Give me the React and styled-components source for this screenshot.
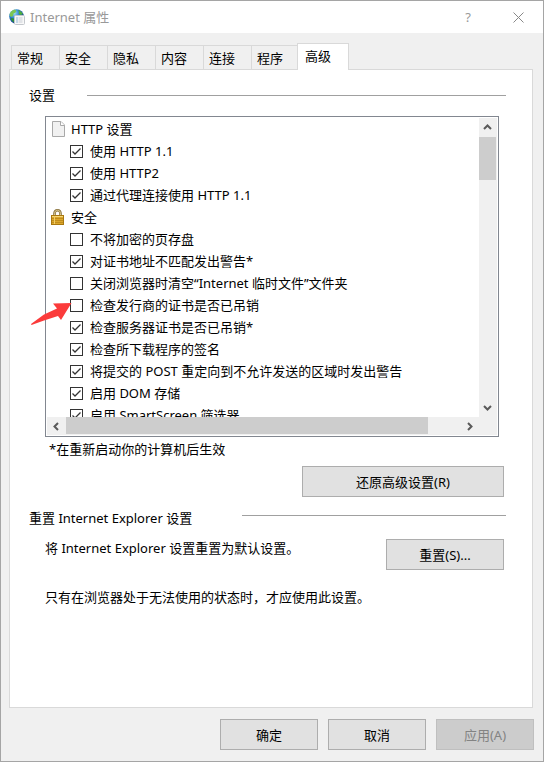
import React from "react"
import styled, {createGlobalStyle, css} from 'styled-components'

const GlobalStyle = createGlobalStyle`
	*{box-sizing:border-box;}
	body{
		margin:0;
		background:#f0f0f0;
		color:#000;
		font:13px/18px "Noto Sans", "Noto Sans CJK SC", sans-serif;
	}
	button, input{font:inherit; color:inherit; margin:0;}
`

////WINDOW FRAME
const Window = styled.main`
	display:flex;
	flex-direction:column;
	min-height:100vh;
	border:1px solid #a5a5a5;
	background:#f0f0f0;
`
const TitleBar = styled.header`
	display:flex;
	align-items:center;
	height:32px;
	padding-left:8px;
	background:#fff;
	color:#999;
`
const Title = styled.h1`
	flex:1;
	margin:0 0 0 5px;
	font-size:13px;
	font-weight:400;
`
const CaptionButton = styled.button`
	display:flex;
	align-items:center;
	justify-content:center;
	width:50px;
	height:30px;
	padding:0;
	border:0;
	background:none;
`
const Body = styled.div`
	display:flex;
	flex:1;
	flex-direction:column;
	padding:10px 10px 0 8px;
`

////TABS
const TabList = styled.nav`
	display:flex;
	align-items:flex-end;
	height:26px;
	padding-left:2px;
`
const Tab = styled.button`
	width:48px;
	height:24px;
	padding:0 0 0 5px;
	border:1px solid #d9d9d9;
	border-width:1px 0 0 1px;
	background:#f0f0f0;
	text-align:left;
	${props => props.$active && css`
		position:relative;
		width:52px;
		height:27px;
		margin:0 0 -1px -2px;
		padding:0 0 2px 7px;
		border-width:1px 1px 0;
		background:#fff;
	`}
`
const Panel = styled.section`
	flex:1;
	padding:16px 26px 16px 19px;
	border:1px solid #d9d9d9;
	background:#fff;
`

////GROUPS INSIDE THE PANEL
const GroupTitle = styled.div`
	display:flex;
	align-items:flex-start;
	gap:${props => props.$gap}px;
	h2{
		margin:0;
		font-size:13px;
		font-weight:400;
	}
	&::after{
		content:"";
		flex:1;
		height:1px;
		margin-top:${props => props.$rule}px;
		background:#a0a0a0;
	}
`
const GroupBody = styled.div`
	padding:12px 2px 12px 16px;
`
const ListFrame = styled.div`
	position:relative;
	margin-right:5px;
`
const ListBox = styled.div`
	display:grid;
	grid-template-columns:1fr 18px;
	grid-template-rows:1fr 18px;
	height:321px;
	padding:1px;
	border:1px solid #828790;
`
const Items = styled.div`
	overflow:hidden;
`
const Category = styled.div`
	display:flex;
	align-items:center;
	gap:5px;
	height:22px;
	padding-left:4px;
	white-space:nowrap;
`
const Option = styled.label`
	display:flex;
	align-items:center;
	gap:7px;
	height:22px;
	padding-left:23px;
	white-space:nowrap;
`
const Tick = styled.span`
	display:grid;
	width:13px;
	height:13px;
	input, svg{
		grid-area:1 / 1;
		width:13px;
		height:13px;
	}
	input{
		appearance:none;
		border:1px solid #333;
		background:#fff;
	}
	svg{
		display:none;
		pointer-events:none;
	}
	input:checked + svg{display:block;}
`
const ScrollBar = styled.div`
	display:flex;
	flex-direction:${props => props.$vertical ? 'column' : 'row'};
	background:#f0f0f0;
`
const ScrollButton = styled.button`
	display:flex;
	flex:0 0 19px;
	align-items:center;
	justify-content:center;
	padding:0 1px 0 0;
	border:0;
	background:none;
`
const Track = styled.div`
	display:flex;
	flex:1;
	flex-direction:inherit;
`
const Thumb = styled.div`
	flex:0 0 ${props => props.$size};
	margin:${props => props.$vertical ? '0 1px 0 0' : '0 0 1px 0'};
	background:#cdcdcd;
`
const Corner = styled.div`
	background:#f0f0f0;
`
const Pointer = styled.svg`
	position:absolute;
	top:186px;
	left:-15px;
`
const Note = styled.p`
	margin:0;
`
const Footnote = styled(Note)`
	padding:3px 0 8px 4px;
`
const Warning = styled(Note)`
	padding-top:18px;
`
const ActionRow = styled.div`
	display:flex;
	justify-content:${props => props.$end ? 'flex-end' : 'space-between'};
	align-items:flex-start;
`
const Button = styled.button`
	width:${props => props.$width || 98}px;
	height:31px;
	padding:0;
	border:1px solid #adadad;
	background:#e1e1e1;
	&:disabled{
		border-color:#bfbfbf;
		background:#ccc;
		color:#838383;
	}
`
const Footer = styled.footer`
	display:flex;
	justify-content:flex-end;
	gap:10px;
	padding:11px 9px 11px;
`

////ICONS
const GlobeIcon = () => (
	<svg width="16" height="16" viewBox="0 0 16 16" aria-hidden="true">
		<defs>
			<radialGradient id="sea" cx="35%" cy="28%" r="75%">
				<stop offset="0" stopColor="#9fdcf5"/>
				<stop offset=".45" stopColor="#2c83cf"/>
				<stop offset="1" stopColor="#0b2f80"/>
			</radialGradient>
		</defs>
		<circle cx="7.500" cy="7.500" r="7.300" fill="url(#sea)"/>
		<path d="M1 4Q3 1 6 .6L7.500 2 6 4 4.500 4.500 4 7 2 8 .6 6.500Z" fill="#7cc653"/>
		<path d="M9 .8Q12.500 2 14 5L11.500 6 9.500 4.500 10 3Z" fill="#4fae3c"/>
		<path d="M2 9L5 9.500 5.500 13.500Q3 12.500 2 10.500Z" fill="#2e8f3c"/>
		<rect x="5.500" y="6.500" width="10" height="9" rx="1" fill="#f8f8f8" stroke="#c3c7cc"/>
		<path d="M7.500 9h1M7.500 11h1M7.500 13h1" stroke="#2f78bd"/>
		<path d="M9.500 9h4M9.500 11h4M9.500 13h4" stroke="#c9ced5"/>
	</svg>
)
const PageIcon = () => (
	<svg width="15" height="16" viewBox="0 0 15 16" aria-hidden="true">
		<path d="M1.500 .5H10L13.500 4V15.500H1.500Z" fill="#f1f1f1" stroke="#a9a9a9"/>
		<path d="M9.500 .5V4.500H13.500" fill="#fff" stroke="#a9a9a9"/>
	</svg>
)
const LockIcon = () => (
	<svg width="15" height="16" viewBox="0 0 15 16" aria-hidden="true">
		<path d="M3.500 8V4.500Q3.500 1.300 6.500 1.300T9.500 4.500V8" fill="none" stroke="#8a7440" strokeWidth="2.600"/>
		<path d="M3.500 8V4.500Q3.500 1.300 6.500 1.300T9.500 4.500V8" fill="none" stroke="#dccb92"/>
		<rect x=".5" y="6.500" width="12" height="9" fill="#dca72c" stroke="#a9780f"/>
		<path d="M1 7.500h11" stroke="#f4d778"/>
		<path d="M1 9.500h11M1 11.500h11M1 13.500h11" stroke="#c08d1d"/>
		<path d="M3.500 7v8" stroke="#efcd68"/>
	</svg>
)
const CheckMark = () => (
	<svg viewBox="0 0 13 13" aria-hidden="true">
		<path d="M2.500 6.500L5 9L10.500 3.500" fill="none" stroke="#333" strokeWidth="1.300"/>
	</svg>
)
const Chevron = ({turn}) => (
	<svg width="9" height="9" viewBox="0 0 9 9" aria-hidden="true">
		<path d="M1 6L4.500 2.500L8 6" fill="none" stroke="#5a5a5a" strokeWidth="2" transform={`rotate(${turn} 4.500 4.500)`}/>
	</svg>
)

////CONTENT
const tabs = ['常规','安全','隐私','内容','连接','程序','高级'];

const settings = [
	{title:'HTTP 设置', icon:<PageIcon/>, options:[
		['使用 HTTP 1.1', true],
		['使用 HTTP2', true],
		['通过代理连接使用 HTTP 1.1', true],
	]},
	{title:'安全', icon:<LockIcon/>, options:[
		['不将加密的页存盘', false],
		['对证书地址不匹配发出警告*', true],
		['关闭浏览器时清空“Internet 临时文件”文件夹', false],
		['检查发行商的证书是否已吊销', false],
		['检查服务器证书是否已吊销*', true],
		['检查所下载程序的签名', true],
		['将提交的 POST 重定向到不允许发送的区域时发出警告', true],
		['启用 DOM 存储', true],
		['启用 SmartScreen 筛选器', true],
	]},
];

const Settings = () => (
	<Items>
		{settings.map(({title,icon,options}) => (
			<React.Fragment key={title}>
				<Category>{icon}{title}</Category>
				{options.map(([text,checked]) => (
					<Option key={text}>
						<Tick><input type="checkbox" defaultChecked={checked}/><CheckMark/></Tick>
						{text}
					</Option>
				))}
			</React.Fragment>
		))}
	</Items>
)

export default function App(){
	const [active, setActive] = React.useState('高级');
	return (
		<>
			<GlobalStyle/>
			<Window>
				<TitleBar>
					<GlobeIcon/>
					<Title>Internet 属性</Title>
					<CaptionButton aria-label="帮助">?</CaptionButton>
					<CaptionButton aria-label="关闭">
						<svg width="11" height="11" viewBox="0 0 11 11" aria-hidden="true">
							<path d="M.5 .5L10.500 10.500M10.500 .5L.5 10.500" stroke="#888"/>
						</svg>
					</CaptionButton>
				</TitleBar>
				<Body>
					<TabList>
						{tabs.map(name => (
							<Tab key={name} $active={name===active} onClick={() => setActive(name)}>{name}</Tab>
						))}
					</TabList>
					<Panel>
						<GroupTitle $gap={32} $rule={9}><h2>设置</h2></GroupTitle>
						<GroupBody>
							<ListFrame>
								<ListBox>
									<Settings/>
									<ScrollBar $vertical>
										<ScrollButton aria-label="向上滚动"><Chevron turn={0}/></ScrollButton>
										<Track><Thumb $vertical $size="43px"/></Track>
										<ScrollButton aria-label="向下滚动"><Chevron turn={180}/></ScrollButton>
									</ScrollBar>
									<ScrollBar>
										<ScrollButton aria-label="向左滚动"><Chevron turn={270}/></ScrollButton>
										<Track><Thumb $size="92%"/></Track>
										<ScrollButton aria-label="向右滚动"><Chevron turn={90}/></ScrollButton>
									</ScrollBar>
									<Corner/>
								</ListBox>
								<Pointer width="42" height="24" viewBox="0 0 42 24" aria-hidden="true">
									<path d="M41.500 1L23 1.500L27 6.500L14 12.500L1 22L1.500 23L14 18.500L28 14L31 18Z" fill="#fb3b3b"/>
								</Pointer>
							</ListFrame>
							<Footnote>*在重新启动你的计算机后生效</Footnote>
							<ActionRow $end><Button $width={202}>还原高级设置(R)</Button></ActionRow>
						</GroupBody>
						<GroupTitle $gap={50} $rule={6}><h2>重置 Internet Explorer 设置</h2></GroupTitle>
						<GroupBody>
							<ActionRow>
								<Note>将 Internet Explorer 设置重置为默认设置。</Note>
								<Button $width={118}>重置(S)...</Button>
							</ActionRow>
							<Warning>只有在浏览器处于无法使用的状态时，才应使用此设置。</Warning>
						</GroupBody>
					</Panel>
				</Body>
				<Footer>
					<Button>确定</Button>
					<Button>取消</Button>
					<Button disabled>应用(A)</Button>
				</Footer>
			</Window>
		</>
	)
}
